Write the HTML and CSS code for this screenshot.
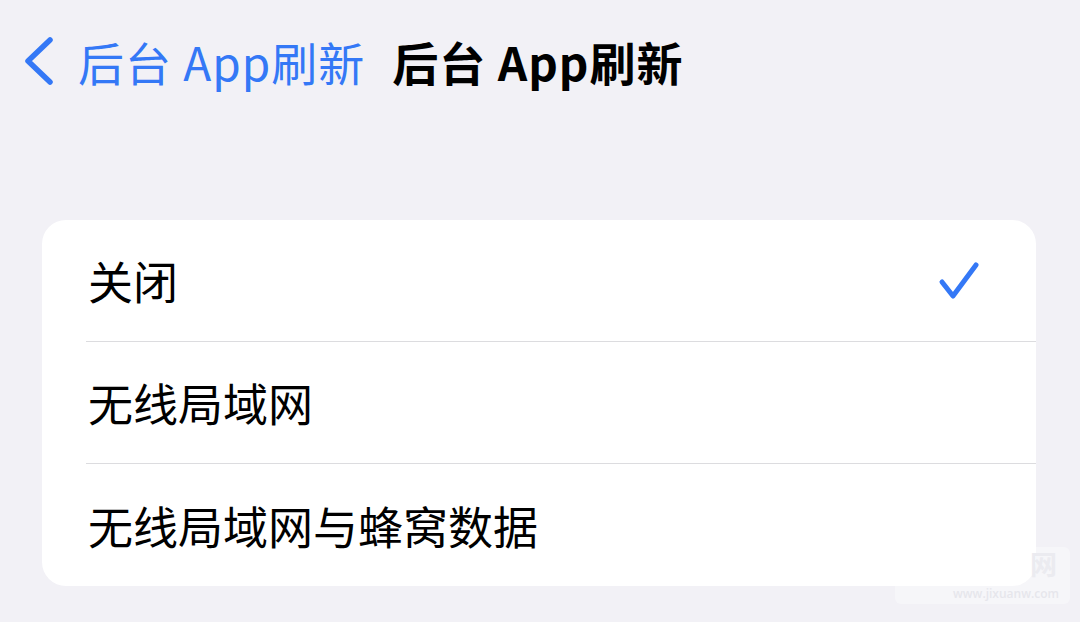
FILE: index.html
```html
<!DOCTYPE html>
<html lang="zh-CN">
<head>
    <meta charset="UTF-8">
    <meta name="viewport" content="width=device-width, initial-scale=1.0">
    <title>后台 App刷新</title>
    <link rel="stylesheet" href="styles.css">
</head>
<body>
    <header class="nav-bar">
        <a class="back-link" href="#">
            <svg class="chevron" width="34" height="50" viewBox="0 0 34 50">
                <path d="M28 4 L6 25 L28 46" fill="none" stroke="currentColor" stroke-width="5.5" stroke-linecap="round" stroke-linejoin="round"/>
            </svg>
            <span>后台 App刷新</span>
        </a>
        <h1 class="page-title">后台 App刷新</h1>
    </header>

    <section class="options">
        <div class="option-row">
            <span>关闭</span>
            <svg class="check" width="42" height="42" viewBox="0 0 42 42">
                <path d="M4 22 L15 36 L38 5" fill="none" stroke="currentColor" stroke-width="5" stroke-linecap="round" stroke-linejoin="round"/>
            </svg>
        </div>
        <div class="option-row">
            <span>无线局域网</span>
        </div>
        <div class="option-row">
            <span>无线局域网与蜂窝数据</span>
        </div>
    </section>

    <!-- watermark -->
    <div class="watermark">
        <span class="wm-mark">网</span>
        <span class="wm-url">www.jixuanw.com</span>
    </div>
</body>
</html>
```

FILE: styles.css
```css
:root {
    --ios-blue: #3478f6;
    --bg-gray: #f2f1f6;
    --separator: #dcdcdf;
}

body {
    margin: 0;
    background: var(--bg-gray);
    font-family: 'Noto Sans CJK SC', 'Noto Sans', sans-serif;
    color: #000;
    overflow: hidden;
    position: relative;
    height: 622px;
}

/* Nav bar */
.nav-bar {
    display: flex;
    align-items: center;
    gap: 27px;
    height: 122px;
    padding-left: 22px;
}

.back-link {
    display: flex;
    align-items: center;
    gap: 22px;
    color: var(--ios-blue);
    text-decoration: none;
    font-size: 46px;
    letter-spacing: 1px;
    line-height: 1;
}

.chevron {
    display: block;
}

.page-title {
    margin: 0;
    font-size: 46px;
    font-weight: 700;
    letter-spacing: 1px;
    line-height: 1;
}

/* Option list */
.options {
    margin: 98px 44px 0 42px;
    background: #fff;
    border-radius: 24px;
}

.option-row {
    display: flex;
    align-items: center;
    justify-content: space-between;
    height: 122px;
    margin-left: 44px;
    padding-left: 2px;
    padding-right: 56px;
    border-bottom: 1.5px solid var(--separator);
    box-sizing: border-box;
    font-size: 45px;
}

.option-row:last-child {
    border-bottom: none;
}

.check {
    color: var(--ios-blue);
    display: block;
}

/* Watermark */
.watermark {
    position: absolute;
    left: 895px;
    top: 547px;
    width: 175px;
    height: 57px;
    border-radius: 6px;
    background: rgba(255, 255, 255, 0.35);
}

.wm-mark {
    position: absolute;
    right: 13px;
    top: 3px;
    font-size: 27px;
    font-weight: 700;
    line-height: 1;
    color: #ebebf0;
}

.wm-url {
    position: absolute;
    right: 11px;
    bottom: 4px;
    font-family: 'Open Sans', sans-serif;
    font-size: 12px;
    font-weight: 600;
    line-height: 1;
    color: #e6e6ec;
}
```
